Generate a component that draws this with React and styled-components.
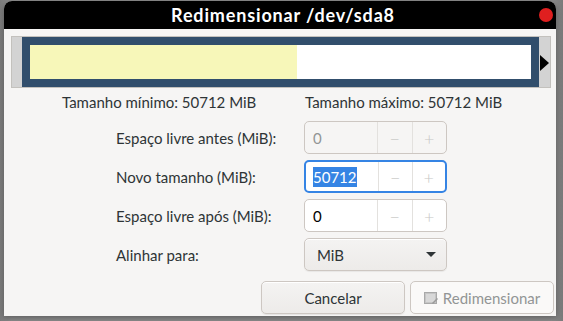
import React from 'react';
import styled, { createGlobalStyle } from 'styled-components';

const GlobalStyle = createGlobalStyle`
    html, body {
        margin: 0;
        padding: 0;
        width: 563px;
        height: 321px;
        overflow: hidden;
        background: #8c8c8c;
    }
    #root {
        width: 563px;
        height: 321px;
    }
    * {
        box-sizing: border-box;
    }
`;

const FONT = `"Lato", "Noto Sans", "DejaVu Sans", sans-serif`;

const Desktop = styled.div`
    width: 563px;
    height: 321px;
    padding: 1px 0 0 4px;
    background: linear-gradient(90deg, #7c7c7c 0%, #8e8e8e 2%, #8e8e8e 98%, #7a7a7a 100%);
    font-family: ${FONT};
`;

const Window = styled.div`
    width: 552px;
    height: 315px;
    border-radius: 8px 8px 0 0;
    background: #f6f5f4;
    display: flex;
    flex-direction: column;
    overflow: hidden;
    box-shadow: 0 2px 6px rgba(0, 0, 0, 0.35);
`;

const TitleBar = styled.div`
    position: relative;
    height: 28px;
    flex: none;
    background: #000;
    display: flex;
    align-items: center;
    justify-content: center;

    h1 {
        margin: 0 0 0 6px;
        font-size: 18px;
        font-weight: 700;
        color: #fff;
        letter-spacing: 0.85px;
    }
`;

const CloseDot = styled.span`
    position: absolute;
    right: 3px;
    top: 7px;
    width: 14px;
    height: 14px;
    border-radius: 50%;
    background: #df1f1f;
`;

const Body = styled.div`
    flex: 1;
    display: flex;
    flex-direction: column;
    padding: 7px 2px 0 7px;
    color: #2e3436;
    font-size: 15px;
`;

const PartitionStrip = styled.div`
    position: relative;
    width: 540px;
    height: 52px;
    background: #d3d3d3;
    border: 1px solid #c3c1bd;
    padding: 0 11px 0 10px;
`;

const PartitionBox = styled.div`
    height: 100%;
    background: #314e6c;
    padding: 8px;
    display: flex;
`;

const Used = styled.div`
    width: ${p => p.$pct}%;
    background: #f7f7b9;
`;

const Free = styled.div`
    flex: 1;
    background: #fff;
`;

const Arrow = styled.span`
    position: absolute;
    right: 1px;
    top: 18px;
    width: 0;
    height: 0;
    border-top: 8px solid transparent;
    border-bottom: 8px solid transparent;
    border-left: 9px solid #000;
`;

const Limits = styled.div`
    display: flex;
    margin: 5px 0 0 51px;
    height: 18px;
    line-height: 18px;

    span:first-child {
        width: 243px;
    }
`;

const Form = styled.div`
    display: grid;
    grid-template-columns: 188px 143px;
    grid-auto-rows: 33px;
    row-gap: 6px;
    margin: 10px 0 0 105px;
    align-items: center;
`;

const Label = styled.label`
    white-space: nowrap;
`;

const Spin = styled.div`
    display: flex;
    height: 33px;
    border: ${p => p.$focused ? '2px solid #3584e4' : '1px solid #cdc7c2'};
    border-radius: 5px;
    background: ${p => p.$disabled ? '#f6f5f4' : '#fff'};
    overflow: hidden;
`;

const SpinEntry = styled.div`
    width: 72px;
    flex: none;
    display: flex;
    align-items: center;
    padding-left: ${p => p.$focused ? 7 : 8}px;
    color: ${p => p.$disabled ? '#929595' : '#000'};

    mark {
        background: #3584e4;
        color: #fff;
        padding: 1px 0;
    }
`;

const SpinButton = styled.div`
    flex: 1;
    display: flex;
    align-items: center;
    justify-content: center;
    border-left: 1px solid #e3e1de;
    color: #c7c7c5;
    font-size: 18px;
    font-weight: 300;
`;

const Combo = styled.div`
    height: 33px;
    border: 1px solid #cdc7c2;
    border-radius: 5px;
    background: linear-gradient(#f4f3f2, #edebe9);
    display: flex;
    align-items: center;
    justify-content: space-between;
    padding: 0 10px 0 12px;
    box-shadow: inset 0 1px #fff, 0 1px 1px rgba(0, 0, 0, 0.06);
`;

const Caret = styled.span`
    width: 0;
    height: 0;
    border-left: 5px solid transparent;
    border-right: 5px solid transparent;
    border-top: 5px solid #2e3436;
`;

const Actions = styled.div`
    display: flex;
    justify-content: flex-end;
    gap: 5px;
    margin-top: 10px;
`;

const Button = styled.button`
    height: 33px;
    width: ${p => p.$w}px;
    border: 1px solid #cdc7c2;
    border-radius: 5px;
    font-family: ${FONT};
    font-size: 15px;
    display: flex;
    align-items: center;
    justify-content: center;
    gap: 5px;
    padding: 0;
    color: ${p => p.disabled ? '#929595' : '#2e3436'};
    background: ${p => p.disabled ? '#faf9f8' : 'linear-gradient(#f4f3f2, #edebe9)'};
    box-shadow: ${p => p.disabled ? 'none' : 'inset 0 1px #fff, 0 1px 1px rgba(0,0,0,0.07)'};
`;

const ResizeIcon = () => (
    <svg width="14" height="14" viewBox="0 0 14 14">
        <rect x="0.5" y="1.5" width="12" height="11" fill="#c5c5c5" stroke="#a9a9a9" />
        <rect x="2" y="3" width="9" height="8" fill="#d8d8d8" />
        <path d="M8 12 L13 7 L14 8 L9 13 Z" fill="#9a9a9a" />
    </svg>
);

const SpinField = ({ value, disabled, focused }) => (
    <Spin $disabled={disabled} $focused={focused}>
        <SpinEntry $disabled={disabled} $focused={focused}>
            {focused ? <mark>{value}</mark> : value}
        </SpinEntry>
        <SpinButton>−</SpinButton>
        <SpinButton>+</SpinButton>
    </Spin>
);

export default function App() {
    return (
        <>
            <GlobalStyle />
            <Desktop>
                <Window>
                    <TitleBar>
                        <h1>Redimensionar /dev/sda8</h1>
                        <CloseDot />
                    </TitleBar>
                    <Body>
                        <PartitionStrip>
                            <PartitionBox>
                                <Used $pct={53.2} />
                                <Free />
                            </PartitionBox>
                            <Arrow />
                        </PartitionStrip>
                        <Limits>
                            <span>Tamanho mínimo: 50712 MiB</span>
                            <span>Tamanho máximo: 50712 MiB</span>
                        </Limits>
                        <Form>
                            <Label>Espaço livre antes (MiB):</Label>
                            <SpinField value="0" disabled />
                            <Label>Novo tamanho (MiB):</Label>
                            <SpinField value="50712" focused />
                            <Label>Espaço livre após (MiB):</Label>
                            <SpinField value="0" />
                            <Label>Alinhar para:</Label>
                            <Combo>
                                <span>MiB</span>
                                <Caret />
                            </Combo>
                        </Form>
                        <Actions>
                            <Button $w={144}>Cancelar</Button>
                            <Button $w={144} disabled>
                                <ResizeIcon />
                                Redimensionar
                            </Button>
                        </Actions>
                    </Body>
                </Window>
            </Desktop>
        </>
    );
}
